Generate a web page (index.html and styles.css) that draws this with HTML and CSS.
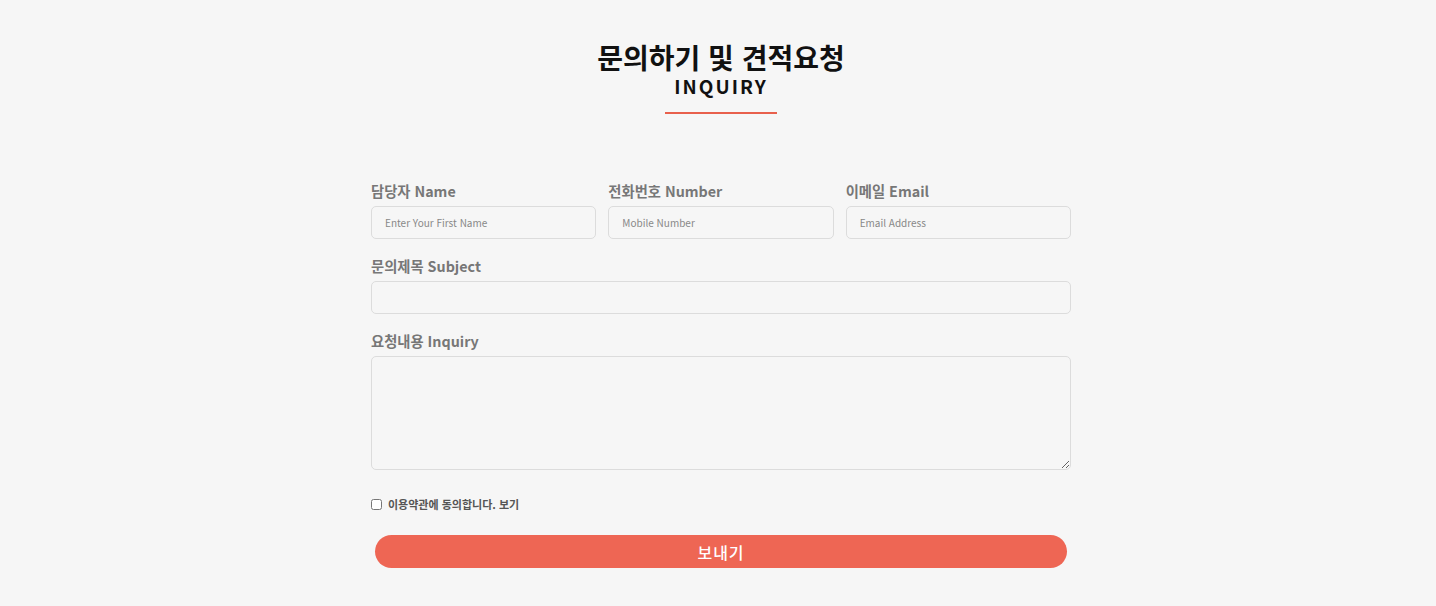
FILE: index.html
```html
<!DOCTYPE html>
<html lang="ko">
<head>
<meta charset="utf-8">
<title>문의하기 및 견적요청</title>
<link rel="stylesheet" href="styles.css">
</head>
<body>
<section class="inquiry">
  <header class="head">
    <h1 class="title">문의하기 및 견적요청</h1>
    <h2 class="subtitle">INQUIRY</h2>
    <span class="bar"></span>
  </header>
  <form class="form">
    <div class="row three">
      <div class="field">
        <label class="label">담당자 Name</label>
        <input class="input" type="text" placeholder="Enter Your First Name">
      </div>
      <div class="field">
        <label class="label">전화번호 Number</label>
        <input class="input" type="text" placeholder="Mobile Number">
      </div>
      <div class="field">
        <label class="label">이메일 Email</label>
        <input class="input" type="text" placeholder="Email Address">
      </div>
    </div>
    <div class="row">
      <div class="field">
        <label class="label">문의제목 Subject</label>
        <input class="input" type="text">
      </div>
    </div>
    <div class="row">
      <div class="field">
        <label class="label">요청내용 Inquiry</label>
        <textarea class="textarea"></textarea>
      </div>
    </div>
    <label class="agree"><input type="checkbox" class="check"><span>이용약관에 동의합니다. 보기</span></label>
    <button type="button" class="submit">보내기</button>
  </form>
</section>
</body>
</html>
```
FILE: styles.css
```css
html, body {
  margin: 0;
  padding: 0;
  background: #f6f6f6;
  font-family: "Noto Sans CJK KR", "Noto Sans", sans-serif;
}
.inquiry {
  width: 700px;
  margin: 0 auto;
  padding-top: 40px;
  padding-left: 6px;
}
.head {
  display: flex;
  flex-direction: column;
  align-items: center;
}
.title {
  margin: 0;
  font-size: 28px;
  line-height: 34px;
  font-weight: 700;
  color: #111;
  letter-spacing: 0;
}
.subtitle {
  margin: 0;
  font-size: 19px;
  line-height: 24px;
  font-weight: 700;
  color: #111;
  letter-spacing: 2px;
}
.bar {
  display: block;
  width: 112px;
  height: 2px;
  background: #e8604c;
  margin-top: 14px;
}
.form {
  margin-top: 67px;
  display: flex;
  flex-direction: column;
}
.row {
  margin-bottom: 17px;
}
.three {
  display: grid;
  grid-template-columns: repeat(3, 1fr);
  column-gap: 12px;
}
.field {
  display: flex;
  flex-direction: column;
}
.label {
  font-size: 14.3px;
  line-height: 20px;
  font-weight: 700;
  color: #777;
  margin-bottom: 5px;
}
.input, .textarea {
  box-sizing: border-box;
  width: 100%;
  border: 1px solid #dcdcdc;
  border-radius: 5px;
  background: #f6f6f6;
  font-family: "Noto Sans CJK KR", "Noto Sans", sans-serif;
  font-size: 10px;
  color: #555;
  outline: none;
}
.input {
  height: 33px;
  padding: 0 13px;
}
.input::placeholder {
  color: #888;
}
.textarea {
  height: 114px;
  resize: vertical;
  padding: 8px 12px;
  display: block;
}
.agree {
  display: flex;
  align-items: center;
  gap: 6px;
  margin-top: 9px;
  font-size: 11px;
  font-weight: 700;
  color: #555;
}
.check {
  margin: 0;
  width: 11px;
  height: 11px;
}
.submit {
  margin: 23px 4px 0;
  height: 33px;
  border: none;
  border-radius: 17px;
  background: #ee6654;
  color: #fff;
  font-family: "Noto Sans CJK KR", "Noto Sans", sans-serif;
  font-size: 16px;
  font-weight: 500;
  letter-spacing: 1px;
}
```
